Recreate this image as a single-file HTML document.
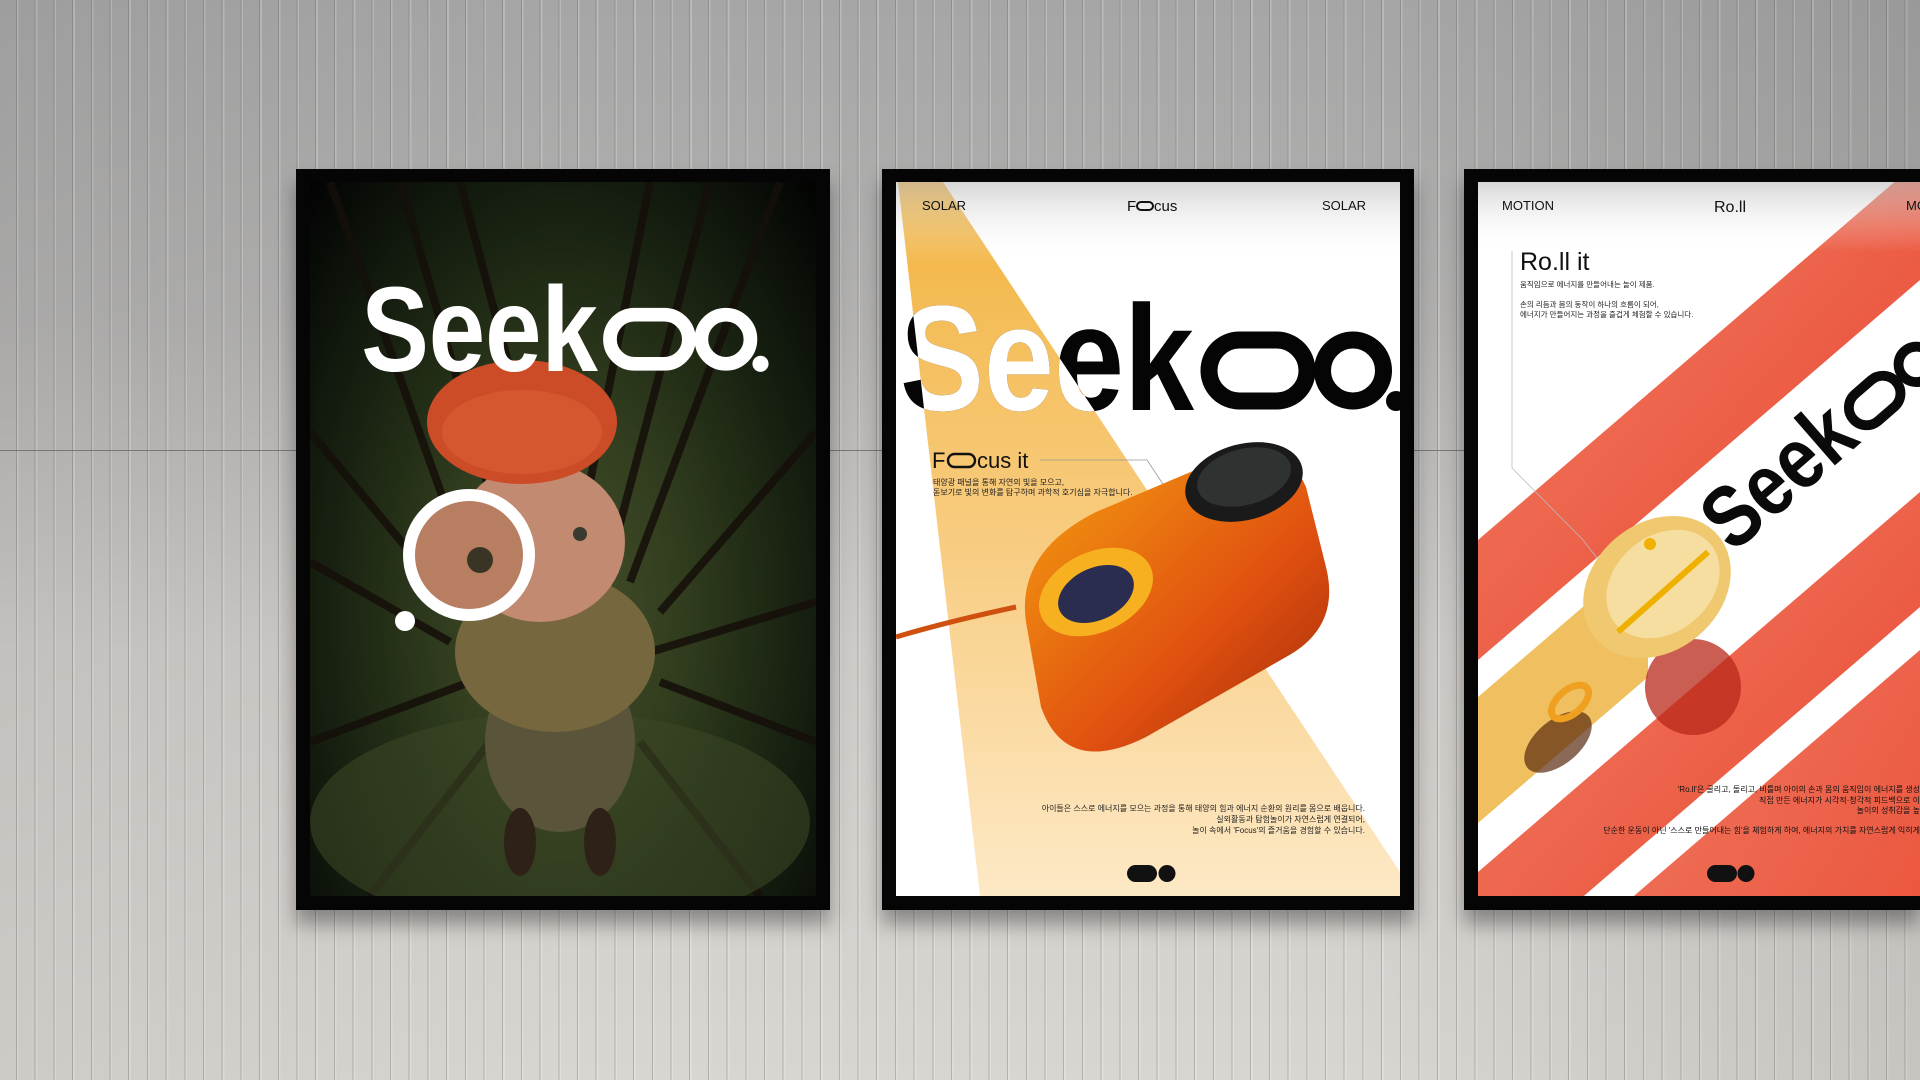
<!DOCTYPE html>
<html><head><meta charset="utf-8"><style>
*{margin:0;padding:0;box-sizing:border-box}
html{width:1920px;height:1080px;overflow:hidden}
body{width:1920px;height:1080px;overflow:hidden;position:relative;font-family:"Liberation Sans","Noto Sans CJK KR",sans-serif;
background:linear-gradient(180deg,#a6a6a6 0%,#b2b1b0 30%,#cdcac7 60%,#d9d5d1 100%);}
.stripes{position:absolute;inset:0;background:repeating-linear-gradient(90deg,rgba(0,0,0,0) 0 16px,rgba(90,90,90,.3) 16px 17px,rgba(255,255,255,.22) 17px 18.7px);}
.shade{position:absolute;inset:0;background:linear-gradient(90deg,rgba(0,0,0,.05),rgba(0,0,0,0) 30%,rgba(0,0,0,0) 70%,rgba(0,0,0,.08));}
.hline{position:absolute;left:0;right:0;top:450px;height:1px;background:#777}
.frame{position:absolute;top:169px;height:741px;background:#050505;box-shadow:0 14px 18px rgba(0,0,0,.35)}
.inner{position:absolute;left:14px;top:13px;right:14px;bottom:14px;overflow:hidden}
svg text{font-family:"Liberation Sans","Noto Sans CJK KR",sans-serif}
</style></head><body>
<div class="stripes"></div><div class="shade"></div><div class="hline"></div>

<!-- left poster -->
<div class="frame" style="left:296px;width:534px">
 <div class="inner" style="background:radial-gradient(ellipse at 50% 60%,#46502c 0%,#303c1d 35%,#1c2613 60%,#0b1009 85%,#020302 100%)">
  <svg width="506" height="714" style="position:absolute;left:0;top:0">
   <g stroke="#150f0a" stroke-width="8" opacity=".85">
    <line x1="20" y1="0" x2="170" y2="420"/><line x1="90" y1="0" x2="200" y2="380"/><line x1="470" y1="0" x2="320" y2="400"/>
    <line x1="400" y1="0" x2="300" y2="380"/><line x1="0" y1="250" x2="150" y2="430"/><line x1="506" y1="250" x2="350" y2="430"/>
    <line x1="0" y1="560" x2="160" y2="500"/><line x1="506" y1="560" x2="350" y2="500"/><line x1="150" y1="0" x2="230" y2="300"/>
    <line x1="340" y1="0" x2="280" y2="300"/><line x1="506" y1="420" x2="340" y2="470"/><line x1="0" y1="380" x2="140" y2="460"/>
    <line x1="60" y1="714" x2="180" y2="560"/><line x1="450" y1="714" x2="330" y2="560"/>
   </g>
   <ellipse cx="250" cy="640" rx="250" ry="110" fill="#3a4624" opacity=".6"/>
   <ellipse cx="250" cy="560" rx="75" ry="90" fill="#5a553a"/>
   <ellipse cx="245" cy="470" rx="100" ry="80" fill="#76673f"/>
   <ellipse cx="210" cy="660" rx="16" ry="34" fill="#2e2218"/><ellipse cx="290" cy="660" rx="16" ry="34" fill="#2e2218"/>
   <ellipse cx="230" cy="360" rx="85" ry="80" fill="#c28a70"/>
   <ellipse cx="212" cy="240" rx="95" ry="62" fill="#cc4c28"/>
   <ellipse cx="212" cy="250" rx="80" ry="42" fill="#e06a3a" opacity=".4"/>
   <circle cx="159" cy="373" r="60" fill="#b87e62" stroke="#fff" stroke-width="12"/>
   <circle cx="170" cy="378" r="13" fill="#3a3424"/>
   <circle cx="270" cy="352" r="7" fill="#3a3a30"/>
   <circle cx="95" cy="439" r="10" fill="#fff"/>
   <g fill="#fff" transform="translate(48,5.5) scale(0.805)">
    <text x="4" y="228" font-weight="bold" font-size="150" textLength="294" lengthAdjust="spacingAndGlyphs">Seek</text>
    <rect x="313" y="158" width="98" height="61" rx="30.5" fill="none" stroke="#fff" stroke-width="17"/>
    <circle cx="457" cy="188.5" r="30.5" fill="none" stroke="#fff" stroke-width="17"/>
    <circle cx="500" cy="219" r="10"/>
   </g>
  </svg>
 </div>
</div>

<!-- middle poster -->
<div class="frame" style="left:882px;width:532px">
 <div class="inner" style="background:#fff">
  <svg width="504" height="714" style="position:absolute;left:0;top:0">
   <defs><linearGradient id="bm" x1="0" y1="0" x2="0" y2="1"><stop offset="0" stop-color="#f2b440"/><stop offset=".5" stop-color="#f8cc80"/><stop offset="1" stop-color="#fde9c6"/></linearGradient>
   <linearGradient id="tp" x1="0" y1="0" x2="0" y2="1"><stop offset="0" stop-color="#bbb" stop-opacity=".6"/><stop offset="1" stop-color="#fff" stop-opacity="0"/></linearGradient>
   <linearGradient id="cam" x1="0" y1="0" x2="1" y2="1"><stop offset="0" stop-color="#f5a010"/><stop offset=".6" stop-color="#e05010"/><stop offset="1" stop-color="#a02a08"/></linearGradient>
   <clipPath id="bc"><polygon points="2,0 47,0 504,690 504,714 84,714"/></clipPath></defs>
   <polygon points="2,0 47,0 504,690 504,714 84,714" fill="url(#bm)"/>
   <rect width="504" height="80" fill="url(#tp)"/>
   <text x="26" y="28" font-size="13" fill="#111">SOLAR</text>
   <text x="231" y="29" font-size="15" fill="#111">F</text><rect x="241" y="20" width="16" height="8" rx="4" fill="none" stroke="#111" stroke-width="2"/><text x="258" y="29" font-size="15" fill="#111">cus</text>
   <text x="426" y="28" font-size="13" fill="#111">SOLAR</text>
   <g fill="#050505">
    <text x="4" y="228" font-weight="bold" font-size="150" textLength="294" lengthAdjust="spacingAndGlyphs">Seek</text>
    <rect x="313" y="158" width="98" height="61" rx="30.5" fill="none" stroke="#050505" stroke-width="17"/>
    <circle cx="457" cy="188.5" r="30.5" fill="none" stroke="#050505" stroke-width="17"/>
    <circle cx="500" cy="219" r="10"/>
   </g>
   <g fill="#fff" clip-path="url(#bc)">
    <text x="4" y="228" font-weight="bold" font-size="150" textLength="294" lengthAdjust="spacingAndGlyphs">Seek</text>
   </g>
   <text x="36" y="286" font-size="22" fill="#111">F</text><rect x="52" y="272" width="27" height="13" rx="6.5" fill="none" stroke="#111" stroke-width="2.4"/><text x="81" y="286" font-size="22" fill="#111">cus it</text>
   <polyline points="144,278 251,278 279,320" fill="none" stroke="#999" stroke-width=".8"/>
   <text x="37" y="303" font-size="8" fill="#222">태양광 패널을 통해 자연의 빛을 모으고,</text>
   <text x="37" y="313" font-size="8" fill="#222">돋보기로 빛의 변화를 탐구하며 과학적 호기심을 자극합니다.</text>
   <path d="M130 440 Q120 370 200 330 L330 275 Q390 258 410 305 L430 385 Q445 445 390 475 L250 555 Q170 595 145 525 Z" fill="url(#cam)"/>
   <ellipse cx="200" cy="410" rx="60" ry="40" fill="#f7b020" transform="rotate(-25 200 410)"/>
   <ellipse cx="200" cy="412" rx="40" ry="26" fill="#2a2d50" transform="rotate(-25 200 412)"/>
   <ellipse cx="348" cy="300" rx="60" ry="38" fill="#1a1a1a" transform="rotate(-15 348 300)"/>
   <ellipse cx="348" cy="295" rx="48" ry="28" fill="#2e3230" transform="rotate(-15 348 295)"/>
   <path d="M0 455 Q50 440 120 425" stroke="#d05010" stroke-width="5" fill="none"/>
   <text x="469" y="629" text-anchor="end" font-size="8" fill="#222">아이들은 스스로 에너지를 모으는 과정을 통해 태양의 힘과 에너지 순환의 원리를 몸으로 배웁니다.</text>
   <text x="469" y="640" text-anchor="end" font-size="8" fill="#222">실외활동과 탐험놀이가 자연스럽게 연결되어,</text>
   <text x="469" y="651" text-anchor="end" font-size="8" fill="#222">놀이 속에서 'Focus'의 즐거움을 경험할 수 있습니다.</text>
   <rect x="231" y="683" width="30" height="17" rx="8.5" fill="#111"/><circle cx="271" cy="691.5" r="8.5" fill="#111"/>
  </svg>
 </div>
</div>

<!-- right poster -->
<div class="frame" style="left:1464px;width:456px">
 <div class="inner" style="background:#fff;right:0">
  <svg width="442" height="714" style="position:absolute;left:0;top:0">
   <defs><linearGradient id="tp2" x1="0" y1="0" x2="0" y2="1"><stop offset="0" stop-color="#bbb" stop-opacity=".6"/><stop offset="1" stop-color="#fff" stop-opacity="0"/></linearGradient>
   <linearGradient id="rd" x1="0" y1="0" x2="1" y2="1"><stop offset="0" stop-color="#f28068"/><stop offset="1" stop-color="#e8442c"/></linearGradient></defs>
   <polygon points="0,358 0,478 442,98 442,-22" fill="url(#rd)"/>
   <polygon points="0,515 0,641 170,495 170,369" fill="#f0c060"/>
   <polygon points="0,690 0,805 442,425 442,310" fill="url(#rd)"/>
   <polygon points="0,848 0,1200 442,820 442,468" fill="url(#rd)"/>
   <circle cx="215" cy="505" r="48" fill="#b8281a" opacity=".75"/>
   <rect width="442" height="70" fill="url(#tp2)"/>
   <text x="24" y="28" font-size="13" fill="#111">MOTION</text>
   <text x="236" y="30" font-size="16" fill="#111">Ro.ll</text>
   <text x="428" y="28" font-size="13" fill="#111">MOTION</text>
   <polyline points="34,69 34,286 105,358 130,390" fill="none" stroke="#bbb" stroke-width=".8"/>
   <text x="42" y="88" font-size="25" fill="#111">Ro.ll it</text>
   <text x="42" y="105" font-size="7.5" fill="#222">움직임으로 에너지를 만들어내는 놀이 제품.</text>
   <text x="42" y="125" font-size="7.5" fill="#222">손의 리듬과 몸의 동작이 하나의 흐름이 되어,</text>
   <text x="42" y="135" font-size="7.5" fill="#222">에너지가 만들어지는 과정을 즐겁게 체험할 수 있습니다.</text>
   <g fill="#0a0a0a" transform="translate(255,372) rotate(-41) scale(0.58) translate(-4,-228)">
    <text x="4" y="228" font-weight="bold" font-size="150" textLength="294" lengthAdjust="spacingAndGlyphs">Seek</text>
    <rect x="313" y="158" width="98" height="61" rx="30.5" fill="none" stroke="#0a0a0a" stroke-width="17"/>
    <circle cx="457" cy="188.5" r="30.5" fill="none" stroke="#0a0a0a" stroke-width="17"/>
   </g>
   <ellipse cx="80" cy="560" rx="40" ry="22" fill="#5a2a10" opacity=".7" transform="rotate(-40 80 560)"/>
   <ellipse cx="92" cy="520" rx="22" ry="12" fill="none" stroke="#f0a020" stroke-width="7" transform="rotate(-40 92 520)"/>
   <ellipse cx="179" cy="405" rx="80" ry="64" fill="#f0c870" transform="rotate(-40 179 405)"/>
   <ellipse cx="185" cy="402" rx="62" ry="48" fill="#f6dea0" transform="rotate(-40 185 402)"/>
   <line x1="140" y1="450" x2="230" y2="370" stroke="#f0b000" stroke-width="6"/>
   <circle cx="172" cy="362" r="6" fill="#f0b000"/>
   <text x="442" y="610" text-anchor="end" font-size="8" fill="#111">'Ro.ll'은 굴리고, 돌리고, 비틀며 아이의 손과 몸의 움직임이 에너지를 생성</text>
   <text x="442" y="621" text-anchor="end" font-size="8" fill="#111">직접 만든 에너지가 시각적·청각적 피드백으로 이</text>
   <text x="442" y="631" text-anchor="end" font-size="8" fill="#111">놀이의 성취감을 높</text>
   <text x="442" y="651" text-anchor="end" font-size="8" fill="#111">단순한 운동이 아닌 '스스로 만들어내는 힘'을 체험하게 하여, 에너지의 가치를 자연스럽게 익히게</text>
   <rect x="229" y="683" width="30" height="17" rx="8.5" fill="#111"/><circle cx="268" cy="691.5" r="8.5" fill="#111"/>
  </svg>
 </div>
</div>
</body></html>
